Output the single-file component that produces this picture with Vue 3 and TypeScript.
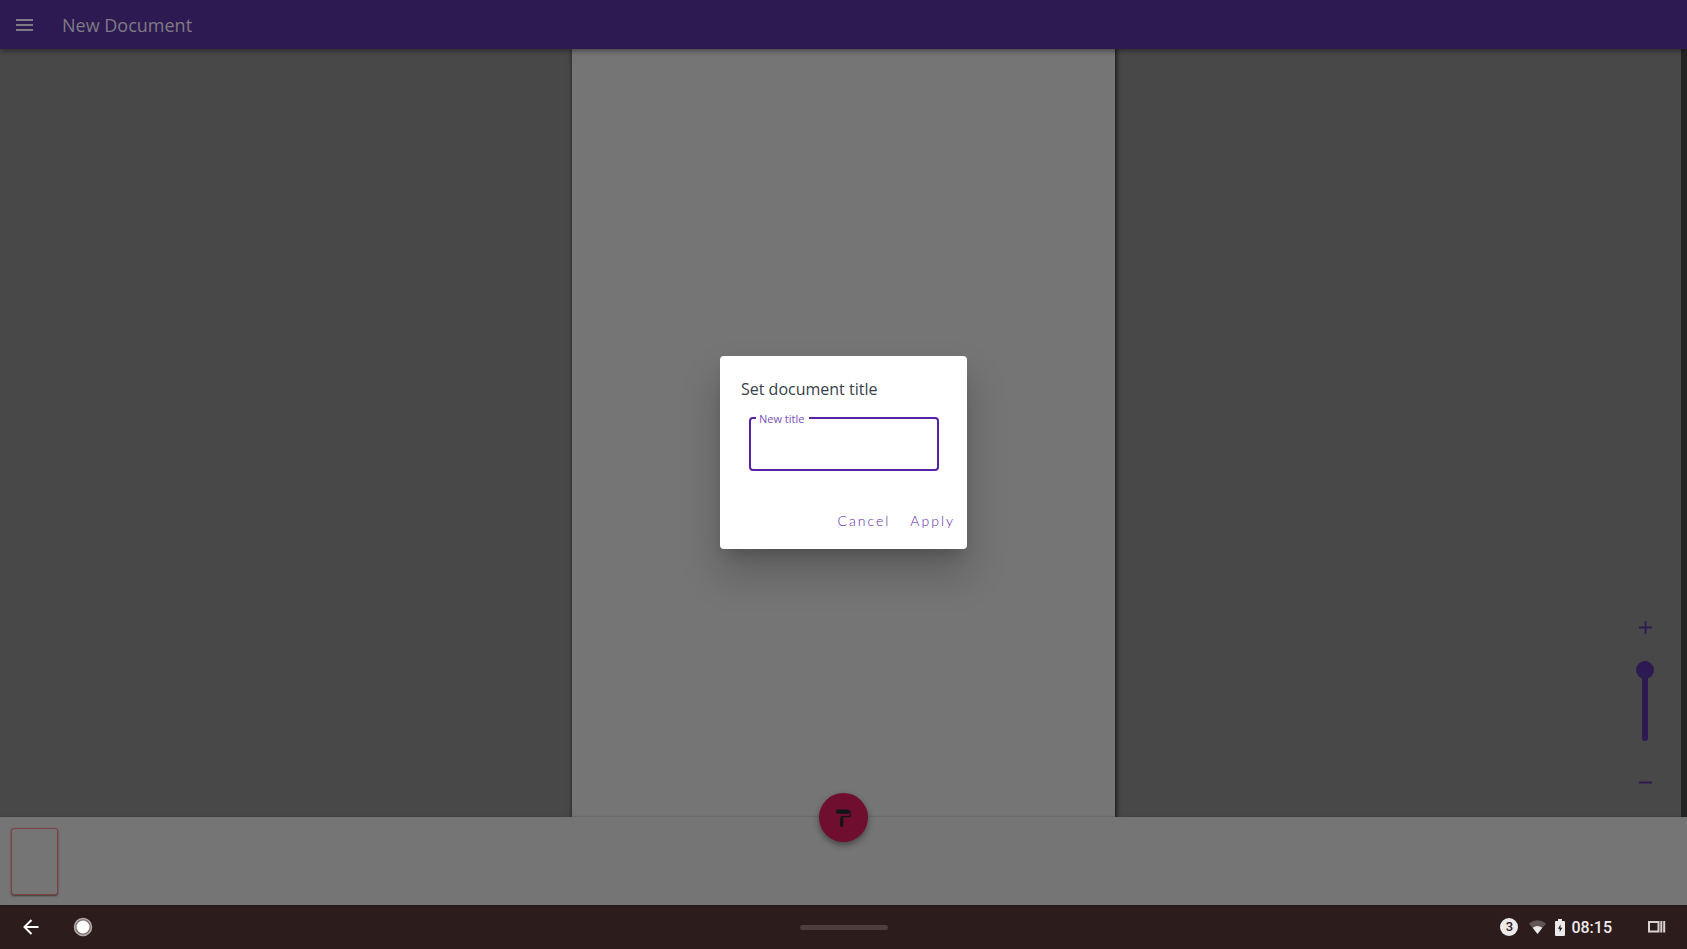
<script setup lang="ts">
import { ref } from 'vue'

const documentName = ref('New Document')
const newTitle = ref('')
const zoom = ref(100)
const dialogOpen = ref(true)

function applyTitle(): void {
  if (newTitle.value.trim()) documentName.value = newTitle.value.trim()
  dialogOpen.value = false
}

function stepZoom(amount: number): void {
  zoom.value = Math.min(100, Math.max(0, zoom.value + amount))
}
</script>

<template>
  <div class="screen">
    <div class="app">
      <header class="topbar">
        <button class="icon-button" type="button" aria-label="Menu">
          <svg width="18" height="12" viewBox="0 0 18 12"><path d="M0 1h17M0 6h17M0 11h17" stroke="currentColor" stroke-width="2" /></svg>
        </button>
        <h1>{{ documentName }}</h1>
      </header>

      <main class="workspace">
        <div class="viewport">
          <div class="page"></div>
          <div class="zoom">
            <button class="icon-button" type="button" aria-label="Zoom in" @click="stepZoom(10)">
              <svg width="13" height="13" viewBox="0 0 13 13"><path d="M0 6.500h13M6.500 0v13" stroke="currentColor" stroke-width="1.800" /></svg>
            </button>
            <input v-model.number="zoom" type="range" min="0" max="100" aria-label="Zoom level" />
            <button class="icon-button" type="button" aria-label="Zoom out" @click="stepZoom(-10)">
              <svg width="13" height="13" viewBox="0 0 13 13"><path d="M0 6.500h13" stroke="currentColor" stroke-width="2" /></svg>
            </button>
          </div>
        </div>
        <div class="gutter"></div>
      </main>

      <section class="pages" aria-label="Pages">
        <button class="thumb" type="button" aria-label="Page 1"></button>
        <button class="fab" type="button" aria-label="Paint">
          <svg width="15" height="18" viewBox="0 0 15 18"><path d="M1 .5h11q.8 0 .8.800V4q0 .8-.8.800H1Q.2 4.800.2 4V1.300Q.2.500 1 .500z" fill="currentColor" /><path d="M12.500 2.500h1.600v5.200H5.600v2" fill="none" stroke="currentColor" stroke-width="1.300" /><path d="M4.200 8.500h3V17q0 .8-.8.800H5q-.8 0-.8-.800z" fill="currentColor" /></svg>
        </button>
      </section>

      <div v-if="dialogOpen" class="overlay">
        <form class="dialog" role="dialog" aria-labelledby="dialog-title" @submit.prevent="applyTitle">
          <h2 id="dialog-title">Set document title</h2>
          <div class="field">
            <label for="new-title">New title</label>
            <input id="new-title" v-model="newTitle" type="text" />
          </div>
          <div class="actions">
            <button type="button" @click="dialogOpen = false">Cancel</button>
            <button type="submit">Apply</button>
          </div>
        </form>
      </div>
    </div>

    <nav class="system">
      <div class="side">
        <button class="icon-button" type="button" aria-label="Back">
          <svg width="16" height="16" viewBox="0 0 16 16"><path d="M15.500 8H2M8.500 1L1.500 8l7 7" fill="none" stroke="#fff" stroke-width="2" /></svg>
        </button>
        <button class="icon-button" type="button" aria-label="Home">
          <svg width="20" height="20" viewBox="0 0 20 20"><circle cx="10" cy="10" r="8.500" fill="#806f70" stroke="#b5abab" stroke-width="1.500" /><circle cx="10" cy="10" r="6.500" fill="#fff" /></svg>
        </button>
      </div>
      <div class="handle"></div>
      <div class="side status">
        <span class="count">3</span>
        <svg class="wifi" width="17" height="14" viewBox="0 0 17 14"><path d="M0 3.600Q8.500-3 17 3.600L8.500 14z" fill="#645657" /><path d="M3.700 7.800Q8.500 4.200 13.300 7.800L8.500 14z" fill="#eceaeb" /></svg>
        <svg class="battery" width="10" height="17" viewBox="0 0 10 17"><path d="M3 0h4v2h2q1 0 1 1v13q0 1-1 1H1q-1 0-1-1V3q0-1 1-1h2z" fill="#eceaeb" /><path d="M5.500 5.500L3 9.800h1.700V13l2.600-4.200H5.500z" fill="#2d1c1c" /></svg>
        <time>08:15</time>
        <button class="icon-button" type="button" aria-label="Overview">
          <svg width="18" height="12" viewBox="0 0 18 12"><path d="M1 1h9.500v9.500H1z" fill="none" stroke="#d8d3d3" stroke-width="2" /><path d="M13.300 0v11.500M16.200 0v11.500" stroke="#d8d3d3" stroke-width="2" /></svg>
        </button>
      </div>
    </nav>
  </div>
</template>

<style>
body {
  margin: 0;
}
</style>

<style scoped>
* {
  box-sizing: border-box;
}

.screen {
  display: flex;
  flex-direction: column;
  height: 100vh;
  overflow: hidden;
  font-family: "Open Sans", "Noto Sans", sans-serif;
  background: #757575;
}

button {
  padding: 0;
  border: 0;
  background: none;
  font: inherit;
  color: inherit;
  cursor: pointer;
}

svg {
  display: block;
}

h1,
h2 {
  margin: 0;
  font-weight: 400;
}

.icon-button {
  display: grid;
  place-items: center;
}

.app {
  position: relative;
  display: flex;
  flex: 1;
  flex-direction: column;
  min-height: 0;
}

.topbar {
  position: relative;
  z-index: 1;
  display: flex;
  flex: none;
  align-items: center;
  gap: 28px;
  height: 49px;
  padding: 0 16px;
  background: #2e1a52;
  color: #7f7a84;
  box-shadow: 0 2px 5px rgba(0, 0, 0, 0.4);
}

.topbar h1 {
  font-size: 18px;
  line-height: 24px;
}

.workspace {
  display: flex;
  flex: 1;
  min-height: 0;
}

.viewport {
  position: relative;
  display: flex;
  flex: 1;
  justify-content: center;
  min-width: 0;
  padding-left: 6px;
  background: #484848;
}

.page {
  height: 100%;
  aspect-ratio: 210 / 297;
  background: #757575;
  box-shadow: 1px 0 4px 1px rgba(0, 0, 0, 0.6);
}

.gutter {
  flex: none;
  width: 6px;
  background: #242424;
}

.zoom {
  position: absolute;
  right: 23px;
  bottom: 22px;
  display: flex;
  flex-direction: column;
  align-items: center;
  color: #2e1a52;
}

.zoom .icon-button {
  width: 26px;
  height: 26px;
}

.zoom input {
  width: 18px;
  height: 80px;
  margin: 21px 0 28px;
  appearance: none;
  background: none;
  writing-mode: vertical-lr;
  direction: rtl;
}

.zoom input::-webkit-slider-runnable-track {
  width: 6px;
  border-radius: 3px;
  background: #2e1a52;
}

.zoom input::-webkit-slider-thumb {
  width: 18px;
  height: 18px;
  margin-left: -6px;
  appearance: none;
  border-radius: 50%;
  background: #2e1a52;
}

.pages {
  position: relative;
  flex: none;
  height: 88px;
  padding: 11px;
  background: #757575;
  box-shadow: 0 0 2px rgba(0, 0, 0, 0.3);
}

.thumb {
  display: block;
  width: 47px;
  height: 67px;
  border: 1px solid #823f3f;
  border-radius: 3px;
  box-shadow: 0 1px 2px rgba(0, 0, 0, 0.5);
  background: #757575;
}

.fab {
  position: absolute;
  top: -24px;
  left: calc(50% - 25px);
  display: grid;
  place-items: center;
  width: 49px;
  height: 49px;
  border-radius: 50%;
  background: #6f0e2e;
  color: #11151a;
  box-shadow: 0 3px 6px rgba(0, 0, 0, 0.4);
}

.overlay {
  position: absolute;
  inset: 0;
  z-index: 2;
  display: grid;
  place-items: center;
}

.dialog {
  width: 247px;
  padding: 21px 8px 14px 21px;
  border-radius: 4px;
  background: #fff;
  box-shadow: 0 11px 15px -7px rgba(0, 0, 0, 0.2), 0 24px 38px 3px rgba(0, 0, 0, 0.18);
}

.dialog h2 {
  color: #37414a;
  font-size: 16px;
  line-height: 24px;
}

.field {
  position: relative;
  margin: 16px 20px 36px 8px;
}

.field label {
  position: absolute;
  top: -6px;
  left: 7px;
  padding: 0 5px 0 3px;
  background: #fff;
  color: #7c50bd;
  font-size: 11px;
  line-height: 16px;
}

.field input {
  display: block;
  width: 100%;
  height: 54px;
  padding: 0 12px;
  border: 2px solid #5a20a8;
  border-radius: 4px;
  outline: none;
  background: #fff;
  color: #37414a;
  font: 16px "Open Sans", sans-serif;
}

.actions {
  display: flex;
  justify-content: flex-end;
  gap: 8px;
}

.actions button {
  padding: 0 4px 0 8px;
  color: #5a28a8;
  font-family: Lato, sans-serif;
  font-size: 14px;
  font-weight: 300;
  line-height: 28px;
  letter-spacing: 2px;
}

.system {
  display: grid;
  flex: none;
  grid-template-columns: 1fr 88px 1fr;
  align-items: center;
  height: 44px;
  background: #2d1c1c;
}

.side {
  display: flex;
  align-items: center;
  gap: 34px;
  padding: 0 23px;
}

.handle {
  height: 5px;
  border-radius: 3px;
  background: #4c3e3e;
}

.status {
  justify-content: flex-end;
  gap: 0;
  padding: 0 21px;
  color: #eceaeb;
  font-family: Roboto, sans-serif;
  font-size: 16px;
  font-weight: 500;
}

.count {
  width: 18px;
  height: 18px;
  border-radius: 50%;
  background: #eceaeb;
  color: #2d1c1c;
  font-size: 13px;
  line-height: 18px;
  text-align: center;
}

.wifi {
  margin: 0 9px 0 11px;
}

.battery {
  margin-right: 6px;
}

.status .icon-button {
  margin-left: 36px;
}
</style>
